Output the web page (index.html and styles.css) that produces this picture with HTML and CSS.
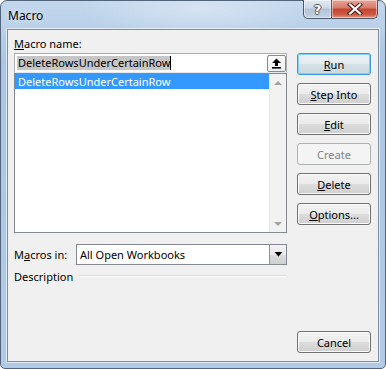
FILE: index.html
```html
<!DOCTYPE html>
<html lang="en">
<head>
  <meta charset="UTF-8">
  <title>Macro</title>
  <link rel="stylesheet" href="styles.css">
</head>
<body>

  <div class="window">
    <div class="titlebar">
      <span class="title">Macro</span>
      <div class="caption-buttons">
        <button class="cap help"><span>?</span></button>
        <button class="cap close">
          <svg width="16" height="12" viewBox="0 0 16 12">
            <path d="M3 1.5 L13 10.5 M13 1.5 L3 10.5" stroke="#4a1e18" stroke-width="4.2" stroke-linecap="square"/>
            <path d="M3 1.5 L13 10.5 M13 1.5 L3 10.5" stroke="#fff" stroke-width="2.2" stroke-linecap="square"/>
          </svg>
        </button>
      </div>
    </div>

    <div class="client">
      <div class="main">
        <label class="field-label"><u>M</u>acro name:</label>
        <div class="name-box">
          <span class="name-text">DeleteRowsUnderCertainRow</span><span class="caret"></span>
          <button class="up-btn">
            <svg width="11" height="11" viewBox="0 0 11 11">
              <polygon points="5.5,0.5 10,5 7,5 7,8 4,8 4,5 1,5" fill="#000"/>
              <rect x="1" y="9" width="9" height="1.6" fill="#000"/>
            </svg>
          </button>
        </div>

        <div class="listbox">
          <ul class="items">
            <li class="selected">DeleteRowsUnderCertainRow</li>
          </ul>
          <div class="scrollbar">
            <span class="arrow up"></span>
            <span class="arrow down"></span>
          </div>
        </div>

        <div class="macros-in">
          <label>M<u>a</u>cros in:</label>
          <div class="combo">
            <span class="combo-text">All Open Workbooks</span>
            <span class="combo-btn">
              <svg width="9" height="5" viewBox="0 0 9 5"><polygon points="0.5,0 8.5,0 4.5,4.5" fill="#000"/></svg>
            </span>
          </div>
        </div>

        <div class="description">
          <span>Description</span>
          <span class="rule"></span>
        </div>
      </div>

      <div class="actions">
        <button class="btn default"><u>R</u>un</button>
        <button class="btn"><u>S</u>tep Into</button>
        <button class="btn"><u>E</u>dit</button>
        <button class="btn" disabled>Create</button>
        <button class="btn"><u>D</u>elete</button>
        <button class="btn"><u>O</u>ptions...</button>
        <button class="btn cancel">Cancel</button>
      </div>
    </div>
  </div>

</body>
</html>
```

FILE: styles.css
```css
* {
  box-sizing: border-box;
}

body {
  margin: 0;
  font-family: "Noto Sans", "Open Sans", sans-serif;
  font-size: 11px;
  color: #000;
  background: #fff;
}

u {
  text-decoration: underline;
  text-underline-offset: 1px;
}

/* window frame */
.window {
  width: 386px;
  height: 369px;
  display: flex;
  flex-direction: column;
  border: 1px solid #52657a;
  border-radius: 7px 7px 5px 5px;
  background:
    radial-gradient(ellipse 120px 30px at 200px 8px, rgba(255, 255, 255, 0.35), rgba(255, 255, 255, 0)),
    linear-gradient(to bottom, #c3d7ec 0px, #b9d0e9 28px, #aac6e4 60px, #b1cbe7 100%);
}

.titlebar {
  height: 28px;
  display: flex;
  justify-content: space-between;
  align-items: flex-start;
}

.title {
  padding: 7px 0 0 7px;
  font-size: 12px;
  line-height: 15px;
  text-shadow: 0 0 6px rgba(255, 255, 255, 0.9);
}

.caption-buttons {
  display: flex;
  margin: -1px 7px 0 0;
}

.cap {
  height: 19px;
  padding: 0;
  border: 1px solid #4b5b6d;
  border-top: none;
  display: flex;
  align-items: center;
  justify-content: center;
  box-shadow: inset 0 0 0 1px rgba(255, 255, 255, 0.45);
}

.help {
  width: 29px;
  border-radius: 0 0 0 5px;
  background: linear-gradient(to bottom, #e3eaf2 0%, #ccd8e5 45%, #b2c3d6 50%, #c4d3e3 100%);
}

.help span {
  font-family: "DejaVu Sans", sans-serif;
  font-weight: bold;
  font-size: 13px;
  line-height: 13px;
  color: #fff;
  text-shadow: -1px 0 #4b5562, 1px 0 #4b5562, 0 -1px #4b5562, 0 1px #4b5562;
}

.close {
  width: 46px;
  border-left: none;
  border-radius: 0 0 5px 0;
  background: linear-gradient(to bottom, #e8a797 0%, #d7796a 45%, #c4442f 50%, #cc5a44 80%, #e49b80 100%);
}

/* client area */
.client {
  flex: 1;
  margin: 0 6px 6px 6px;
  border: 1px solid #7f8d9c;
  box-shadow: 0 0 0 1px rgba(255, 255, 255, 0.6);
  background: #f0f0f0;
  display: flex;
  padding: 0 7px 8px 6px;
}

.main {
  width: 273px;
  display: flex;
  flex-direction: column;
}

.field-label {
  height: 23px;
  padding-top: 6px;
  line-height: 15px;
}

.name-box {
  height: 20px;
  display: flex;
  align-items: center;
  padding-left: 2px;
  background: #fff;
  border: 1px solid #abadb3;
  border-bottom-color: #e3e9ef;
}

.name-text {
  background: #c6c6c6;
  padding: 0 0 0 1px;
  line-height: 14px;
}

.caret {
  width: 1px;
  height: 14px;
  background: #000;
}

.up-btn {
  margin-left: auto;
  align-self: flex-start;
  margin-top: 1px;
  width: 19px;
  height: 17px;
  padding: 0;
  border: 1px solid #8a8a8a;
  border-radius: 2px;
  background: linear-gradient(to bottom, #fdfdfd, #eeeeee);
  display: flex;
  align-items: center;
  justify-content: center;
}

.listbox {
  height: 160px;
  display: flex;
  background: #fff;
  border: 1px solid #828790;
}

.items {
  flex: 1;
  list-style: none;
  margin: 0;
  padding: 0;
}

.items li {
  height: 15px;
  line-height: 15px;
  padding-left: 3px;
}

.items li.selected {
  background: #3399ff;
  color: #fff;
}

.scrollbar {
  width: 17px;
  display: flex;
  flex-direction: column;
  justify-content: space-between;
  background: #f2f2f2;
  border-left: 1px solid #e8e8e8;
}

.arrow {
  height: 17px;
  display: flex;
  align-items: center;
  justify-content: center;
}

.arrow::before {
  content: "";
  border-left: 4px solid transparent;
  border-right: 4px solid transparent;
}

.arrow.up::before {
  border-bottom: 4px solid #a3a3a3;
}

.arrow.down::before {
  border-top: 4px solid #a3a3a3;
}

.macros-in {
  margin-top: 11px;
  height: 21px;
  display: flex;
  align-items: center;
}

.macros-in label {
  width: 62px;
}

.combo {
  flex: 1;
  height: 21px;
  display: flex;
  align-items: center;
  background: #fff;
  border: 1px solid #828790;
}

.combo-text {
  padding-left: 3px;
}

.combo-btn {
  margin-left: auto;
  width: 17px;
  height: 19px;
  display: flex;
  align-items: center;
  justify-content: center;
  border-left: 1px solid #8e8f8f;
  background: linear-gradient(to bottom, #f2f2f2 0%, #ebebeb 50%, #dddddd 50%, #cfcfcf 100%);
}

.description {
  margin-top: 3px;
  height: 16px;
  display: flex;
  align-items: center;
}

.rule {
  flex: 1;
  height: 2px;
  margin-left: 6px;
  border-top: 1px solid #d5dfe5;
  border-bottom: 1px solid #fff;
}

/* command buttons */
.actions {
  width: 74px;
  margin-left: 10px;
  padding-top: 23px;
  display: flex;
  flex-direction: column;
  gap: 8px;
}

.btn {
  height: 22px;
  padding: 0;
  font-family: inherit;
  font-size: 11px;
  color: #000;
  border: 1px solid #707070;
  border-radius: 3px;
  background: linear-gradient(to bottom, #f2f2f2 0%, #ebebeb 50%, #dddddd 50%, #cfcfcf 100%);
  box-shadow: inset 0 0 0 1px #fbfbfb;
}

.btn.default {
  border-color: #3c9ad4;
  box-shadow: inset 0 0 0 1px #7fd1f7;
  background: linear-gradient(to bottom, #eaf2f7 0%, #e3ecf2 50%, #d6e1e8 50%, #cad7df 100%);
}

.btn:disabled {
  color: #838383;
  border-color: #adb2b5;
  background: #f4f4f4;
  box-shadow: none;
}

.btn.cancel {
  margin-top: auto;
}
```
